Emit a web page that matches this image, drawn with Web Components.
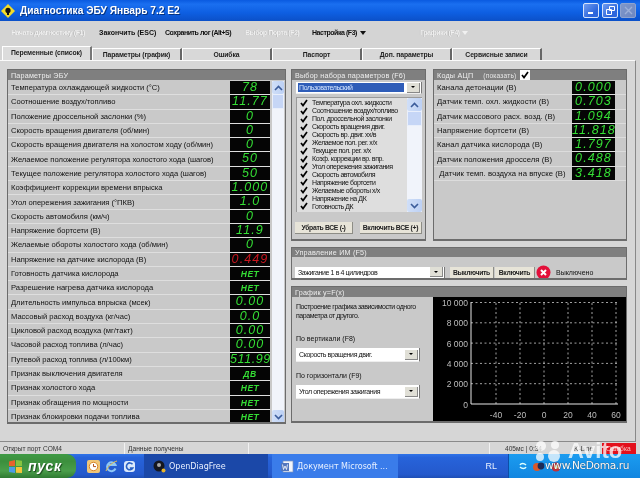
<!DOCTYPE html>
<html lang="ru">
<head>
<meta charset="utf-8">
<title>Диагностика ЭБУ Январь 7.2 E2</title>
<style>
  html, body { margin: 0; padding: 0; width: 640px; height: 478px; overflow: hidden; background: #d4d4d4; }
  body { font-family: "Liberation Sans", Arial, sans-serif; font-size: 8px; color: #111; filter: blur(.3px); }
</style>
</head>
<body>

<title-bar></title-bar>
<menu-bar>
  <menu-item disabled style="width:88px;margin-left:11px">Начать диагностику (F1)</menu-item>
  <menu-item style="width:66px;letter-spacing:0">Закончить (ESC)</menu-item>
  <menu-item style="width:80px">Сохранить лог (Alt+S)</menu-item>
  <menu-item disabled style="width:67px">Выбор Порта (F2)</menu-item>
  <menu-item arrow style="width:108px">Настройка (F3)</menu-item>
  <menu-item disabled arrow>Графики (F4)</menu-item>
</menu-bar>
<tab-strip></tab-strip>

<tab-page>
  <panel-box heading="Параметры ЭБУ" style="width:279px;height:355px">
    <param-list id="params"></param-list>
  </panel-box>
  <div style="display:flex;flex-direction:column;gap:6px;width:336px">
    <div style="display:flex;gap:7px">
      <panel-box heading="Выбор набора параметров (F6)" style="width:135px;height:172px">
        <set-picker></set-picker>
      </panel-box>
      <panel-box heading="Коды АЦП" show-check style="width:194px;height:172px">
        <param-list id="adc" wide></param-list>
      </panel-box>
    </div>
    <panel-box heading="Управление ИМ (F5)" thin style="height:33px">
      <im-control></im-control>
    </panel-box>
    <panel-box heading="График y=F(x)" style="height:137px">
      <graph-page></graph-page>
    </panel-box>
  </div>
</tab-page>

<status-bar></status-bar>
<xp-taskbar></xp-taskbar>
<avito-mark></avito-mark>

<script>
const PARAMS = [
  ['Температура охлаждающей жидкости (°С)', '78'],
  ['Соотношение воздух/топливо', '11.77'],
  ['Положение дроссельной заслонки (%)', '0'],
  ['Скорость вращения двигателя (об/мин)', '0'],
  ['Скорость вращения двигателя на холостом ходу (об/мин)', '0'],
  ['Желаемое положение регулятора холостого хода (шагов)', '50'],
  ['Текущее положение регулятора холостого хода (шагов)', '50'],
  ['Коэффициент коррекции времени впрыска', '1.000'],
  ['Угол опережения зажигания (°ПКВ)', '1.0'],
  ['Скорость автомобиля (км/ч)', '0'],
  ['Напряжение бортсети (В)', '11.9'],
  ['Желаемые обороты холостого хода (об/мин)', '0'],
  ['Напряжение на датчике кислорода (В)', '0.449', 'red'],
  ['Готовность датчика кислорода', 'НЕТ', 'word'],
  ['Разрешение нагрева датчика кислорода', 'НЕТ', 'word'],
  ['Длительность импульса впрыска (мсек)', '0.00'],
  ['Массовый расход воздуха (кг/час)', '0.0'],
  ['Цикловой расход воздуха (мг/такт)', '0.00'],
  ['Часовой расход топлива (л/час)', '0.00'],
  ['Путевой расход топлива (л/100км)', '511.99', 'long'],
  ['Признак выключения двигателя', 'ДВ', 'word'],
  ['Признак холостого хода', 'НЕТ', 'word'],
  ['Признак обгащения по мощности', 'НЕТ', 'word'],
  ['Признак блокировки подачи топлива', 'НЕТ', 'word']
];
const ADC = [
  ['Канала детонации (В)', '0.000'],
  ['Датчик темп. охл. жидкости (В)', '0.703'],
  ['Датчик массового расх. возд. (В)', '1.094'],
  ['Напряжение бортсети (В)', '11.818'],
  ['Канал датчика кислорода (В)', '1.797'],
  ['Датчик положения дросселя (В)', '0.488'],
  ['\u00a0Датчик темп. воздуха на впуске (В)', '3.418']
];
const SET_ITEMS = ['Температура охл. жидкости', 'Соотношение воздух/топливо', 'Пол. дроссельной заслонки',
  'Скорость вращения двиг.', 'Скорость вр. двиг. хх/в', 'Желаемое пол. рег. х/х', 'Текущее пол. рег. х/х',
  'Коэф. коррекции вр. впр.', 'Угол опережения зажигания', 'Скорость автомобиля', 'Напряжение бортсети',
  'Желаемые обороты х/х', 'Напряжение на ДК', 'Готовность ДК'];

class TitleBar extends HTMLElement {
  constructor() {
    super();
    this.attachShadow({mode: 'open'});
    this.shadowRoot.innerHTML = `
    <style>
      :host { display: flex; align-items: center; height: 21px; padding: 0 3px 0 1px;
        background: linear-gradient(#0a5ae0, #1a6ff0 20%, #0e5fe2 60%, #0b50c8); color: #fff; }
      svg { display: block; }
      h1 { flex: 1; margin: 0 0 0 5px; font: bold 10.2px "Liberation Sans", sans-serif; letter-spacing: 0;
        text-shadow: 1px 1px 0 #06327e; }
      .btn { width: 16px; height: 15px; margin-left: 3px; border: 1px solid #d5e3fb; border-radius: 2px; box-sizing: border-box;
        background: linear-gradient(135deg, #6f9cf0, #2d66dc 70%); display: flex; align-items: center; justify-content: center; }
      .off { background: linear-gradient(135deg, #7f97c9, #6d87c2); border-color: #8ea3cf; margin-left: 2px; margin-right: 1px; }
    </style>
    <svg width="14" height="14" viewBox="0 0 14 14"><path d="M7 0 14 7 7 14 0 7z" fill="#f4dc2a"/><circle cx="7" cy="6.4" r="2.6" fill="#111"/><path d="M6 9h2v2H6z" fill="#111"/></svg>
    <h1>Диагностика ЭБУ Январь 7.2 Е2</h1>
    <span class="btn"><svg width="9" height="9"><path d="M1 6h5v2H1z" fill="#fff"/></svg></span>
    <span class="btn"><svg width="9" height="9"><path d="M3.5.5h5v4h-5zM.5 3.5h5v5h-5z" fill="none" stroke="#fff"/></svg></span>
    <span class="btn off"><svg width="9" height="9"><path d="M1 1l7 7M8 1 1 8" stroke="#9db0d8" stroke-width="1.4"/></svg></span>
    `;
  }
}

class MenuBar extends HTMLElement {
  constructor() {
    super();
    this.attachShadow({mode: 'open'});
    this.shadowRoot.innerHTML = `
    <style>
      :host { display: flex; align-items: center; height: 22px; margin-bottom: 4px; background: #d4d4d4; }
    </style>
    <slot></slot>
    `;
  }
}

class MenuItem extends HTMLElement {
  constructor() {
    super();
    this.attachShadow({mode: 'open'});
    this.shadowRoot.innerHTML = `
    <style>
      :host { display: block; flex: none; font: bold 7px "Liberation Sans", sans-serif; letter-spacing: -.45px; white-space: nowrap; color: #111; }
      :host([disabled]) { color: #f1f1f1; text-shadow: -.5px 0 0 #a9a9a9; }
      .arrow { display: none; margin-left: 3px; width: 0; height: 0; border: 3px solid transparent; border-top: 4px solid currentColor; border-bottom: 0; vertical-align: 0; }
      :host([arrow]) .arrow { display: inline-block; }
    </style>
    <slot></slot><span class="arrow"></span>
    `;
  }
}

class TabStrip extends HTMLElement {
  constructor() {
    super();
    this.attachShadow({mode: 'open'});
    const names = ['Переменные (список)', 'Параметры (график)', 'Ошибка', 'Паспорт', 'Доп. параметры', 'Сервисные записи'];
    this.shadowRoot.innerHTML = `
    <style>
      :host { display: flex; height: 13px; padding-left: 2px; align-items: flex-end; }
      div { width: 90px; height: 12px; text-align: center; box-sizing: border-box; font: bold 6.8px/11px "Liberation Sans", sans-serif; letter-spacing: -.1px;
        background: #d8d8d8; border-top: 1px solid #fff; border-left: 1px solid #fff; border-right: 2px solid #666; color: #222; }
      .on { height: 14px; background: #dcdcdc; border-right-color: #777; }
    </style>
    ${names.map((n, i) => `<div class="${i === 0 ? 'on' : ''}">${n}</div>`).join('')}
    `;
  }
}

class TabPage extends HTMLElement {
  constructor() {
    super();
    this.attachShadow({mode: 'open'});
    this.shadowRoot.innerHTML = `
    <style>
      :host { display: flex; gap: 5px; box-sizing: border-box; height: 381px; width: 636px; padding: 8px 0 0 7px; background: #d6d6d6;
        border-top: 1px solid #fafafa; border-right: 1px solid #888; }
    </style>
    <slot></slot>
    `;
  }
}

class PanelBox extends HTMLElement {
  constructor() {
    super();
    this.attachShadow({mode: 'open'});
    this.shadowRoot.innerHTML = `
    <style>
      :host { display: flex; flex-direction: column; flex: none; box-sizing: border-box; border: 1px solid #6c6c6c; border-bottom-width: 2px; background: #c9c9c9; overflow: hidden; }
      header { flex: none; display: flex; align-items: center; height: 10px; padding: 0 3px; background: #7f7f7f; color: #eee; font: 7.2px "Liberation Sans", sans-serif; letter-spacing: .2px; white-space: nowrap; }
      :host([thin]) header { height: 9px; }
      .show { display: none; margin-left: 10px; align-items: center; color: #e6e6e6; font-size: 6.6px; }
      :host([show-check]) .show { display: flex; }
      .box { display: flex; margin-left: 3px; width: 10px; height: 10px; background: #fff; align-items: center; justify-content: center; }
      main { flex: 1; min-height: 0; display: flex; flex-direction: column; }
    </style>
    <header><span></span><span class="show">(показать)<span class="box"><svg width="8" height="8" viewBox="0 0 8 8"><path d="M1 4l2 2.5L7 1" fill="none" stroke="#000" stroke-width="1.7"/></svg></span></span></header>
    <main><slot></slot></main>
    `;
  }
  connectedCallback() {
    this.shadowRoot.querySelector('header span').textContent = this.getAttribute('heading');
  }
}

class ParamList extends HTMLElement {
  constructor() {
    super();
    this.attachShadow({mode: 'open'});
  }
  connectedCallback() {
    const rows = this.id === 'adc' ? ADC : PARAMS;
    const wide = this.id === 'adc';
    this.shadowRoot.innerHTML = `
    <style>
      :host { display: flex; flex: 1; min-height: 0; padding-top: 1px; }
      .rows { flex: 1; min-width: 0; }
      scroll-track { flex: none; }
    </style>
    <div class="rows">${rows.map(r => `<param-row label="${r[0]}" value="${r[1]}" kind="${r[2] || ''}" ${wide ? 'wide' : ''}></param-row>`).join('')}</div>
    ${wide ? '' : '<scroll-track style="height:342px;width:12px;margin:0 1px 0 2px"></scroll-track>'}
    `;
  }
}

class ParamRow extends HTMLElement {
  constructor() {
    super();
    this.attachShadow({mode: 'open'});
  }
  connectedCallback() {
    const kind = this.getAttribute('kind');
    this.shadowRoot.innerHTML = `
    <style>
      :host { display: flex; box-sizing: border-box; height: 14.3px; padding-left: 3px; border-bottom: 1px solid #dedede; align-items: center; }
      :host([wide]) { border-bottom-color: #dcdcdc; padding-right: 11px; padding-left: 3px; }
      span { flex: 1; min-width: 0; font: 7.6px "Liberation Sans", sans-serif; letter-spacing: -.02px; white-space: nowrap; color: #111; }
      :host([wide]) span { font-size: 7.7px; letter-spacing: .05px; }
      lcd-value { flex: none; }
      :host([wide]) lcd-value { width: 43px; margin: 0; }
    </style>
    <span>${this.getAttribute('label')}</span>
    <lcd-value kind="${kind}">${this.getAttribute('value')}</lcd-value>
    `;
  }
}

class LcdValue extends HTMLElement {
  constructor() {
    super();
    this.attachShadow({mode: 'open'});
    this.shadowRoot.innerHTML = `
    <style>
      :host { display: block; width: 40px; height: 13.3px; background: #050505; color: #35df35; text-align: center; overflow: hidden; white-space: nowrap;
        font: italic 12.5px/13.3px "Liberation Sans Narrow", "Liberation Sans", sans-serif; letter-spacing: 1.1px; }
      :host([kind="red"]) { color: #c8161e; }
      :host([kind="long"]) { letter-spacing: .6px; }
      :host([kind="word"]) { font: italic bold 8.5px/14px "Liberation Sans", sans-serif; letter-spacing: .5px; }
    </style>
    <slot></slot>
    `;
  }
}

class ScrollTrack extends HTMLElement {
  constructor() {
    super();
    this.attachShadow({mode: 'open'});
    this.shadowRoot.innerHTML = `
    <style>
      :host { display: flex; flex-direction: column; background: #f1f4fb; }
      .b { flex: none; height: 13px; background: linear-gradient(90deg, #d0dff8, #bcd0f4); display: flex; align-items: center; justify-content: center; border-radius: 2px; }
      .t { flex: none; height: 15px; background: #c6d6f6; border: 1px solid #e9effb; box-sizing: border-box; }
      .s { flex: 1; }
    </style>
    <div class="b"><svg width="9" height="6"><path d="M1 5l3.5-3.5L8 5" fill="none" stroke="#3b5c9a" stroke-width="1.6"/></svg></div>
    <div class="t"></div>
    <div class="s"></div>
    <div class="b"><svg width="9" height="6"><path d="M1 1l3.5 3.5L8 1" fill="none" stroke="#3b5c9a" stroke-width="1.6"/></svg></div>
    `;
  }
}

class XpCombo extends HTMLElement {
  constructor() {
    super();
    this.attachShadow({mode: 'open'});
    this.shadowRoot.innerHTML = `
    <style>
      :host { display: flex; box-sizing: border-box; height: 12px; background: #fff; align-items: center; padding: 0 1px 0 3px; font: 7px "Liberation Sans", sans-serif; letter-spacing: -.4px; color: #111; white-space: nowrap; border-bottom: 1px solid #eee; border-right: 1px solid #777; }
      :host([tall]) { height: 14px; }
      .txt { flex: 1; min-width: 0; overflow: hidden; }
      :host([selected]) .txt { background: #2f5db8; color: #d5e6ff; height: 9px; line-height: 9px; margin-left: -1px; padding-left: 1px; margin-right: 3px; }
      .arr { flex: none; width: 12px; height: 9px; background: #e0dfd6; border-right: 1px solid #888; border-bottom: 1px solid #888; display: flex; align-items: center; justify-content: center; }
      .arr i { width: 0; height: 0; border: 2px solid transparent; border-top: 2px solid #000; border-bottom: 0; }
    </style>
    <span class="txt"><slot></slot></span><span class="arr"><i></i></span>
    `;
  }
}

class XpButton extends HTMLElement {
  constructor() {
    super();
    this.attachShadow({mode: 'open'});
    this.shadowRoot.innerHTML = `
    <style>
      :host { display: flex; flex: none; box-sizing: border-box; height: 12px; align-items: center; justify-content: center; white-space: nowrap;
        background: #e7e4d8; border-right: 1px solid #8d8d86; border-bottom: 1px solid #8d8d86; font: bold 6.8px "Liberation Sans", sans-serif; letter-spacing: -.3px; color: #222; }
    </style>
    <slot></slot>
    `;
  }
}

class SetPicker extends HTMLElement {
  constructor() {
    super();
    this.attachShadow({mode: 'open'});
    this.shadowRoot.innerHTML = `
    <style>
      :host { display: flex; flex-direction: column; padding: 2px 3px 0 4px; }
      .list { display: flex; height: 114px; margin-top: 3px; background: #dedede; border: 1px solid #9a9a9a; border-width: 1px 0 0 1px; }
      ul { flex: 1; list-style: none; margin: 0; padding: 1px 0 0 3px; min-width: 0; overflow: hidden; }
      li { display: flex; height: 7.95px; align-items: center; gap: 4px; font: 7px "Liberation Sans", sans-serif; letter-spacing: -.42px; white-space: nowrap; color: #111; }
      svg { flex: none; }
      scroll-track { width: 15px; flex: none; }
      .btns { display: flex; justify-content: space-between; margin-top: 10px; padding-right: 0; margin-left: -1px; }
    </style>
    <xp-combo selected>Пользовательский</xp-combo>
    <div class="list">
      <ul>${SET_ITEMS.map(t => `<li><svg width="8" height="8" viewBox="0 0 8 8"><path d="M1 4l2 2.5L7 1" fill="none" stroke="#000" stroke-width="1.7"/></svg>${t}</li>`).join('')}</ul>
      <scroll-track></scroll-track>
    </div>
    <div class="btns">
      <xp-button style="width:58px">Убрать ВСЕ (-)</xp-button>
      <xp-button style="width:62px">Включить ВСЕ (+)</xp-button>
    </div>
    `;
  }
}

class ImControl extends HTMLElement {
  constructor() {
    super();
    this.attachShadow({mode: 'open'});
    this.shadowRoot.innerHTML = `
    <style>
      :host { display: flex; align-items: center; padding: 8px 0 0 3px; font: 7px "Liberation Sans", sans-serif; }
      xp-combo { width: 150px; margin-right: 5px; }
      svg { margin: 0 5px 0 1px; flex: none; }
    </style>
    <xp-combo>Зажигание 1 в 4 цилиндров</xp-combo>
    <xp-button style="width:44px">Выключить</xp-button>
    <xp-button style="width:40px;margin-left:1px">Включить</xp-button>
    <svg width="15" height="15" viewBox="0 0 15 15"><circle cx="7.5" cy="7.5" r="7" fill="#e3103a"/><path d="M5 5l5 5M10 5l-5 5" stroke="#fff" stroke-width="2"/></svg>
    <span>Выключено</span>
    `;
  }
}

class GraphPage extends HTMLElement {
  constructor() {
    super();
    this.attachShadow({mode: 'open'});
    this.shadowRoot.innerHTML = `
    <style>
      :host { display: flex; flex: 1; min-height: 0; }
      .side { flex: none; width: 141px; box-sizing: border-box; padding: 6px 0 0 4px; font: 7px/8.5px "Liberation Sans", sans-serif; color: #111; white-space: nowrap; }
      p { margin: 0; }
      xp-combo { width: 124px; }
    </style>
    <div class="side">
      <p style="height:32px;letter-spacing:-.42px">Построение графика зависимости одного<br>параметра от другого.</p>
      <p style="height:13px">По вертикали (F8)</p>
      <xp-combo tall>Скорость вращения двиг.</xp-combo>
      <p style="margin-top:10px;height:13px">По горизонтали (F9)</p>
      <xp-combo tall>Угол опережения зажигания</xp-combo>
    </div>
    <plot-chart></plot-chart>
    `;
  }
}

class PlotChart extends HTMLElement {
  constructor() {
    super();
    this.attachShadow({mode: 'open'});
    let g = '', t = '';
    [0, 2000, 4000, 6000, 8000, 10000].forEach((v, i) => {
      const y = 107 - i * 20.3;
      if (i) g += `<path d="M38 ${y}H185" stroke="#ccc" stroke-width=".8" stroke-dasharray="2 2.5"/>`;
      t += `<text x="35" y="${y + 3.5}" text-anchor="end">${String(v).replace(/(\d)(?=\d{3}$)/, '$1 ')}</text>`;
    });
    [-40, -20, 0, 20, 40, 60].forEach((v, i) => {
      const x = 63 + i * 24;
      g += `<path d="M${x} 6V107" stroke="#ccc" stroke-width=".8" stroke-dasharray="2 2.5"/>`;
      t += `<text x="${x}" y="121" text-anchor="middle">${v}</text>`;
    });
    this.shadowRoot.innerHTML = `
    <style>
      :host { display: block; flex: 1; background: #000; min-width: 0; overflow: hidden; }
      svg { display: block; }
      text { font: 8.5px "Liberation Sans", sans-serif; fill: #bdbdbd; }
    </style>
    <svg width="193" height="125" viewBox="0 0 193 125">${g}
      <path d="M38 5V107H185" fill="none" stroke="#e8e8e8" stroke-width="1"/>${t}
    </svg>
    `;
  }
}

class StatusBar extends HTMLElement {
  constructor() {
    super();
    this.attachShadow({mode: 'open'});
    this.shadowRoot.innerHTML = `
    <style>
      :host { display: flex; box-sizing: border-box; width: 636px; height: 13px; align-items: stretch; padding-top: 1px; font: 6.6px "Liberation Sans", sans-serif; color: #333; background: #d6d6d6; border-top: 1px solid #8a8a8a; white-space: nowrap; }
      div { display: flex; align-items: center; box-sizing: border-box; padding-left: 3px; border-right: 1px solid #f2f2f2; flex: none; }
    </style>
    <div style="width:125px">Открыт порт COM4</div>
    <div style="width:124px">Данные получены</div>
    <div style="width:241px"></div>
    <div style="width:70px;padding-left:15px;border:0">405мс | 0:34</div>
    <div style="width:42px;padding-left:14px;border:0">K-Line</div>
    <div style="flex:1;background:#e3101c;color:#f7c0c0;padding-left:4px;border:0">Ошибка</div>
    `;
  }
}

class XpTaskbar extends HTMLElement {
  constructor() {
    super();
    this.attachShadow({mode: 'open'});
    this.shadowRoot.innerHTML = `
    <style>
      :host { display: flex; align-items: stretch; height: 24px; background: linear-gradient(#2f73e8, #2763da 15%, #2459cc 85%, #1e4fb5); color: #e8f0ff; font: 8px "DejaVu Sans", sans-serif; white-space: nowrap; }
      .start { flex: none; width: 76px; box-sizing: border-box; padding-left: 8px; display: flex; align-items: center; gap: 5px; background: linear-gradient(#3f9a45, #3c8f3d 30%, #4a9e4a 70%, #2f7a32); border-radius: 0 9px 9px 0; color: #fff; font: italic bold 14px "Liberation Sans", sans-serif; letter-spacing: .6px; text-shadow: 1px 1px 1px #1c4a1c; }
      .quick { flex: none; display: flex; align-items: center; gap: 5px; padding: 0 8px 0 11px; }
      .task { flex: none; display: flex; align-items: center; gap: 3px; box-sizing: border-box; padding-left: 9px; margin-right: 4px; }
      .t1 { width: 124px; background: #1b48a8; }
      .t2 { width: 126px; background: #3a7cea; }
      .lang { flex: 1; display: flex; align-items: center; justify-content: flex-end; padding-right: 11px; font: 9px "Liberation Sans", sans-serif; }
      .tray { flex: none; width: 132px; background: linear-gradient(#1b9cf0, #1286e0); display: flex; align-items: center; padding-left: 10px; gap: 5px; box-sizing: border-box; border-left: 1px solid #0c4fa8; }
      svg { flex: none; display: block; }
    </style>
    <div class="start">
      <svg width="15" height="15" viewBox="0 0 15 15"><path d="M1 2.5 7 1v6H1z" fill="#e8622c"/><path d="M8 1l6 .8V7H8z" fill="#86c440"/><path d="M1 8h6v6l-6-1z" fill="#4d9be6"/><path d="M8 8h6v6l-6-.3z" fill="#f4c53a"/></svg>
      <span>пуск</span>
    </div>
    <div class="quick">
      <svg width="13" height="13" viewBox="0 0 13 13"><rect width="13" height="13" rx="2" fill="#f0c678"/><circle cx="6.5" cy="6.5" r="4.2" fill="#fff" stroke="#d8862a"/><path d="M6.5 4v2.6H9" fill="none" stroke="#b0501c"/></svg>
      <svg width="13" height="13" viewBox="0 0 13 13"><path d="M10.5 8.5A4.4 4.4 0 1 1 10.5 5H3.6" fill="none" stroke="#8fc7f6" stroke-width="2"/><path d="M1 11C3 6 8 2 12 1" fill="none" stroke="#f2c448" stroke-width="1"/></svg>
      <svg width="13" height="13" viewBox="0 0 13 13"><rect x="1" y="1" width="11" height="11" rx="3" fill="#dbe9fb"/><path d="M9.5 4.2A3.4 3.4 0 1 0 9.8 8H6.8" fill="none" stroke="#2a62c4" stroke-width="1.6"/></svg>
    </div>
    <div class="task t1">
      <svg width="13" height="13" viewBox="0 0 13 13"><circle cx="6" cy="6" r="5.5" fill="#15171f"/><circle cx="6" cy="5" r="2" fill="#a9a9a9"/><circle cx="10.5" cy="10.5" r="2" fill="#e8b52c"/></svg>
      <span>OpenDiagFree</span>
    </div>
    <div class="task t2">
      <svg width="13" height="13" viewBox="0 0 13 13"><rect x="2" y="1" width="10" height="11" fill="#f2f5fb" stroke="#7d93bd" stroke-width=".7"/><rect x="0" y="3" width="8" height="8" fill="#5276bd"/><path d="M1.5 4.5l1 5 1.5-3.5 1.5 3.5 1-5" fill="none" stroke="#fff" stroke-width=".8"/></svg>
      <span>Документ Microsoft ...</span>
    </div>
    <div class="lang">RL</div>
    <div class="tray">
      <svg width="8" height="8" viewBox="0 0 8 8"><path d="M1 3C2 1 5 1 7 3M7 5C6 7 3 7 1 5" fill="none" stroke="#dff" stroke-width="1.5"/></svg>
      <svg width="13" height="13" viewBox="0 0 13 13"><circle cx="5" cy="7" r="4" fill="#d9582a"/><circle cx="9" cy="6" r="3.4" fill="#1b2a55"/></svg>
      <svg width="13" height="13" viewBox="0 0 13 13"><circle cx="6" cy="7" r="4.5" fill="#c2303a"/><circle cx="6" cy="7" r="2" fill="#f0c050"/></svg>
    </div>
    `;
  }
}

class AvitoMark extends HTMLElement {
  constructor() {
    super();
    this.attachShadow({mode: 'open'});
    this.shadowRoot.innerHTML = `
    <style>
      :host { position: absolute; left: 533px; top: 439px; width: 106px; height: 36px; pointer-events: none; color: #fff; }
      .logo { position: absolute; left: 0; top: 0; display: flex; align-items: center; gap: 4px; font: bold 22px/24px "Liberation Sans", sans-serif; opacity: .75; }
      .site { position: absolute; left: 12px; top: 20px; font: 10.6px "DejaVu Sans", sans-serif; letter-spacing: -.35px; text-shadow: 0 0 1px #123; white-space: nowrap; }
      svg { display: block; fill: currentColor; }
    </style>
    <div class="logo"><svg width="31" height="24" viewBox="0 0 31 24"><circle cx="8" cy="7" r="5"/><circle cx="22" cy="6" r="4"/><circle cx="7" cy="18" r="4"/><circle cx="21" cy="17" r="6"/></svg>Avito</div>
    <div class="site">www.NeDoma.ru</div>
    `;
  }
}

customElements.define('title-bar', TitleBar);
customElements.define('menu-bar', MenuBar);
customElements.define('menu-item', MenuItem);
customElements.define('tab-strip', TabStrip);
customElements.define('tab-page', TabPage);
customElements.define('panel-box', PanelBox);
customElements.define('param-list', ParamList);
customElements.define('param-row', ParamRow);
customElements.define('lcd-value', LcdValue);
customElements.define('scroll-track', ScrollTrack);
customElements.define('xp-combo', XpCombo);
customElements.define('xp-button', XpButton);
customElements.define('set-picker', SetPicker);
customElements.define('im-control', ImControl);
customElements.define('graph-page', GraphPage);
customElements.define('plot-chart', PlotChart);
customElements.define('status-bar', StatusBar);
customElements.define('xp-taskbar', XpTaskbar);
customElements.define('avito-mark', AvitoMark);
</script>
</body>
</html>
